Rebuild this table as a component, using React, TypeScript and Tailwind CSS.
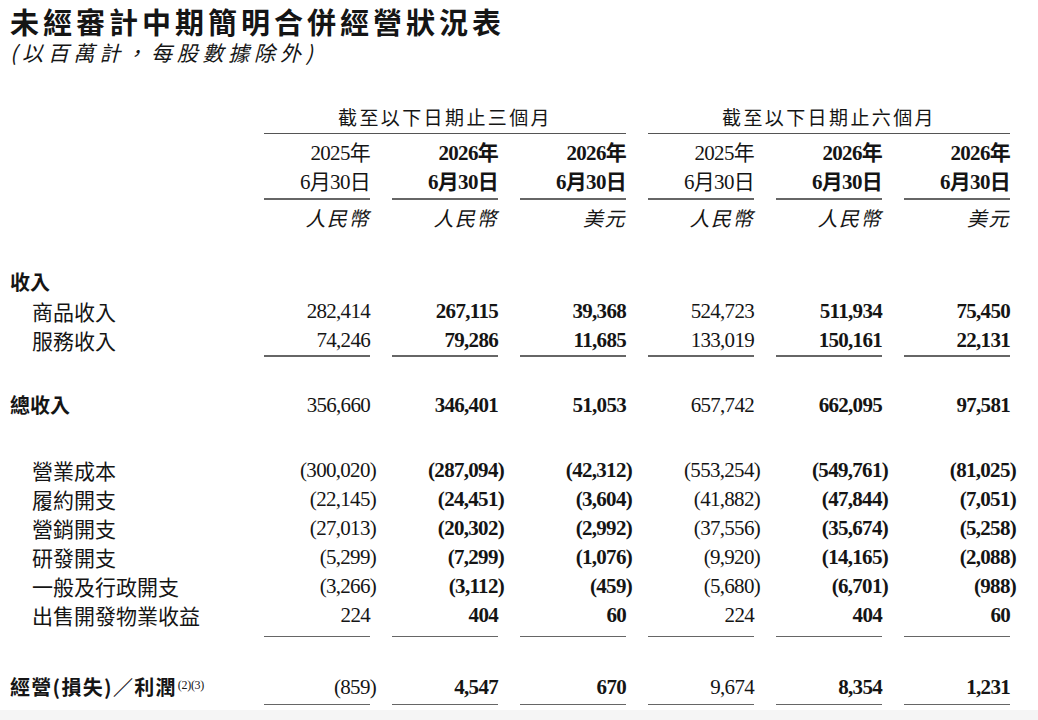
import React from 'react'

const grid = 'grid grid-cols-[242px_repeat(6,106px)] gap-x-[22px]'
const serif = "font-['Liberation_Serif','Noto_Sans_CJK_TC',serif]"
const sans = "font-['Noto_Sans_CJK_TC','Noto_Sans_CJK_SC',sans-serif]"

// columns 2, 3, 5, 6 (current year) are set in bold
const boldCols = [false, true, true, false, true, true]

type Line = { label: string; values: string[]; indent?: boolean; strong?: boolean; sup?: string }

const revenue: Line[] = [
  { label: '商品收入', indent: true, values: ['282,414', '267,115', '39,368', '524,723', '511,934', '75,450'] },
  { label: '服務收入', indent: true, values: ['74,246', '79,286', '11,685', '133,019', '150,161', '22,131'] },
]

const total: Line = {
  label: '總收入',
  strong: true,
  values: ['356,660', '346,401', '51,053', '657,742', '662,095', '97,581'],
}

const costs: Line[] = [
  { label: '營業成本', indent: true, values: ['(300,020)', '(287,094)', '(42,312)', '(553,254)', '(549,761)', '(81,025)'] },
  { label: '履約開支', indent: true, values: ['(22,145)', '(24,451)', '(3,604)', '(41,882)', '(47,844)', '(7,051)'] },
  { label: '營銷開支', indent: true, values: ['(27,013)', '(20,302)', '(2,992)', '(37,556)', '(35,674)', '(5,258)'] },
  { label: '研發開支', indent: true, values: ['(5,299)', '(7,299)', '(1,076)', '(9,920)', '(14,165)', '(2,088)'] },
  { label: '一般及行政開支', indent: true, values: ['(3,266)', '(3,112)', '(459)', '(5,680)', '(6,701)', '(988)'] },
  { label: '出售開發物業收益', indent: true, values: ['224', '404', '60', '224', '404', '60'] },
]

const operating: Line = {
  label: '經營(損失)／利潤',
  strong: true,
  sup: '(2)(3)',
  values: ['(859)', '4,547', '670', '9,674', '8,354', '1,231'],
}

function Num({ value, bold }: { value: string; bold: boolean }) {
  const negative = value.startsWith('(')
  return (
    <div className={`${serif} text-right text-[21px] tracking-[-0.7px] ${bold ? 'font-bold' : ''}`}>
      <span className={negative ? 'mr-[-6px]' : ''}>{value}</span>
    </div>
  )
}

function Row({ line }: { line: Line }) {
  return (
    <div className={`${grid} h-[29px] items-center text-[#151515]`}>
      <div
        className={`${sans} whitespace-nowrap ${
          line.indent ? 'pl-[32px] text-[21px]' : 'pl-[10px] text-[20px] font-bold'
        } ${line.sup ? 'tracking-[1.3px]' : ''}`}
      >
        {line.label}
        {line.sup && (
          <sup className={`${serif} ml-[1px] text-[12px] font-normal tracking-[-0.3px]`}>{line.sup}</sup>
        )}
      </div>
      {line.values.map((v, i) => (
        <Num key={i} value={v} bold={boldCols[i]} />
      ))}
    </div>
  )
}

function Rule({ className = '' }: { className?: string }) {
  return (
    <div className={`${grid} ${className}`}>
      <div />
      {boldCols.map((_, i) => (
        <div key={i} className="h-[1.5px] bg-[#666]" />
      ))}
    </div>
  )
}

export default function App() {
  const years = ['2025年', '2026年', '2026年', '2025年', '2026年', '2026年']
  const currency = ['人民幣', '人民幣', '美元', '人民幣', '人民幣', '美元']

  return (
    <div className="flex h-[720px] w-[1038px] flex-col overflow-hidden bg-white text-[#151515]">
      <div className="pl-[10px] pt-[5px]">
        <h1 className={`${sans} text-[29px] font-bold leading-[32px] tracking-[4px]`}>
          未經審計中期簡明合併經營狀況表
        </h1>
        <p className={`${sans} mt-[1px] text-[21px] italic leading-[28px] tracking-[4.8px]`}>
          (以百萬計，每股數據除外)
        </p>
      </div>

      {/* column headings */}
      <div className={`${grid} mt-[39px]`}>
        <div />
        <div
          className={`${sans} col-span-3 border-b-[1.5px] border-[#555] pb-[4px] text-center text-[19px] leading-[24px] tracking-[2.4px]`}
        >
          截至以下日期止三個月
        </div>
        <div
          className={`${sans} col-span-3 border-b-[1.5px] border-[#555] pb-[4px] text-center text-[19px] leading-[24px] tracking-[2.4px]`}
        >
          截至以下日期止六個月
        </div>
      </div>

      <div className={`${grid} mt-[5px]`}>
        <div />
        {years.map((y, i) => (
          <div
            key={i}
            className={`${serif} h-[29px] text-right text-[21px] leading-[29px] tracking-[-0.7px] ${boldCols[i] ? 'font-bold' : ''}`}
          >
            {y}
          </div>
        ))}
        <div />
        {years.map((_, i) => (
          <div
            key={i}
            className={`${serif} h-[29px] text-right text-[21px] leading-[29px] tracking-[-0.7px] ${boldCols[i] ? 'font-bold' : ''}`}
          >
            6月30日
          </div>
        ))}
      </div>
      <Rule className="mt-[1px]" />
      <div className={`${grid} mt-[3.5px]`}>
        <div />
        {currency.map((c, i) => (
          <div key={i} className={`${sans} h-[29px] text-right text-[20px] italic leading-[29px] tracking-[1.5px]`}>
            {c}
          </div>
        ))}
      </div>

      {/* revenue */}
      <div className="mt-[35px]">
        <Row line={{ label: '收入', strong: true, values: [] }} />
        {revenue.map((l) => (
          <Row key={l.label} line={l} />
        ))}
      </div>
      <Rule className="mt-[1px]" />

      <div className="mt-[33px]">
        <Row line={total} />
      </div>

      {/* costs and expenses */}
      <div className="mt-[36px]">
        {costs.map((l) => (
          <Row key={l.label} line={l} />
        ))}
      </div>
      <Rule className="mt-[7px]" />

      <div className="mt-[34.5px]">
        <Row line={operating} />
      </div>
      <Rule className="mt-[3px]" />

      <div className="mt-auto h-[10px] bg-[#f5f5f5]" />
    </div>
  )
}
